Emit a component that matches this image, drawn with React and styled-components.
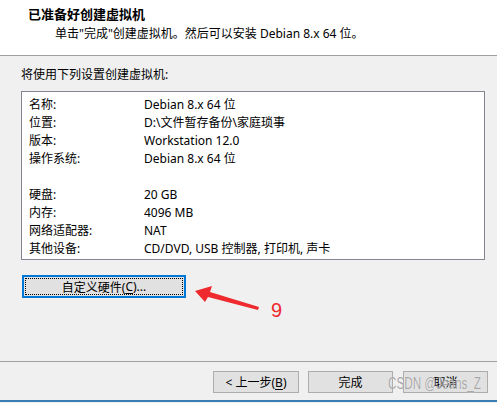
import React from "react";
import styled, { createGlobalStyle } from "styled-components";

const Global = createGlobalStyle`
  html, body {
    margin: 0;
    padding: 0;
    background: #f0f0f0;
  }
  body {
    font-family: "Noto Sans", "Noto Sans CJK SC", sans-serif;
    font-size: 12px;
    color: #000;
  }
`;

const Window = styled.div`
  position: relative;
  width: 497px;
  height: 403px;
  display: flex;
  flex-direction: column;
  background: #f0f0f0;
  overflow: hidden;
`;

const Header = styled.div`
  height: 56px;
  background: #fff;
  border-bottom: 1px solid #a0a0a0;
  padding: 5px 0 0 28px;
  box-sizing: border-box;
  display: flex;
  flex-direction: column;
  gap: 2px;
  h1 {
    margin: 0;
    font-size: 13px;
    font-weight: 700;
    line-height: 18px;
  }
  p {
    margin: 0 0 0 27px;
    line-height: 18px;
  }
`;

const Body = styled.div`
  flex: 1;
  padding: 10px 12px 0 21px;
  display: flex;
  flex-direction: column;
  align-items: flex-start;
`;

const Caption = styled.div`
  line-height: 18px;
`;

const Summary = styled.div`
  margin-top: 7px;
  width: 464px;
  box-sizing: border-box;
  background: #fff;
  border: 1px solid #82878f;
  padding: 4px 0 1px 7px;
`;

const Row = styled.div`
  display: grid;
  grid-template-columns: 115px 1fr;
  height: 18px;
  line-height: 18px;
  white-space: nowrap;
`;

const WinButton = styled.button`
  position: relative;
  font: inherit;
  color: #000;
  height: ${(p) => (p.$focused ? 23 : 22)}px;
  width: ${(p) => p.$w}px;
  padding: 0;
  background: #e1e1e1;
  border: ${(p) => (p.$focused ? "2px solid #0078d7" : "1px solid #adadad")};
  display: flex;
  align-items: center;
  justify-content: center;
  u {
    text-decoration: underline;
    text-underline-offset: 2px;
  }
  &::after {
    content: "";
    display: ${(p) => (p.$focused ? "block" : "none")};
    position: absolute;
    inset: 1px;
    border: 1px dotted #000;
  }
`;

const CustomButton = styled(WinButton)`
  margin: 15px 0 0 1px;
`;

const Footer = styled.div`
  border-top: 1px solid #a0a0a0;
  padding: 9px 9px 7px 0;
  display: flex;
  justify-content: flex-end;
  gap: 9px;
  border-bottom: 2px solid #3c7db5;
  margin-bottom: 1px;
`;

const Annotation = styled.svg`
  position: absolute;
  left: 0;
  top: 0;
  pointer-events: none;
`;

const StepNo = styled.span`
  position: absolute;
  left: 271px;
  top: 299px;
  font-family: "Liberation Sans", sans-serif;
  font-size: 20px;
  color: #ee2a2e;
`;

const Watermark = styled.span`
  position: absolute;
  left: 388px;
  top: 375px;
  white-space: nowrap;
  font-family: "Liberation Sans", sans-serif;
  font-size: 16px;
  transform: scaleX(0.73);
  transform-origin: left center;
  color: rgba(140, 140, 140, 0.75);
  text-shadow: 0 0 1px rgba(255, 255, 255, 0.9);
  pointer-events: none;
`;

const rows = [
  ["名称:", "Debian 8.x 64 位"],
  ["位置:", "D:\\文件暂存备份\\家庭琐事"],
  ["版本:", "Workstation 12.0"],
  ["操作系统:", "Debian 8.x 64 位"],
  ["", ""],
  ["硬盘:", "20 GB"],
  ["内存:", "4096 MB"],
  ["网络适配器:", "NAT"],
  ["其他设备:", "CD/DVD, USB 控制器, 打印机, 声卡"],
];

export default function App() {
  return (
    <Window>
      <Global />
      <Header>
        <h1>已准备好创建虚拟机</h1>
        <p>单击"完成"创建虚拟机。然后可以安装 Debian 8.x 64 位。</p>
      </Header>
      <Body>
        <Caption>将使用下列设置创建虚拟机:</Caption>
        <Summary>
          {rows.map(([k, v], i) => (
            <Row key={i}>
              <span>{k}</span>
              <span>{v}</span>
            </Row>
          ))}
        </Summary>
        <CustomButton $focused $w={164}>
          自定义硬件(<u>C</u>)...
        </CustomButton>
      </Body>
      <Footer>
        <WinButton $w={86}>
          &lt; 上一步(<u>B</u>)
        </WinButton>
        <WinButton $w={85}>完成</WinButton>
        <WinButton $w={85} style={{ marginLeft: 1 }}>
          取消
        </WinButton>
      </Footer>
      <Annotation width="497" height="403" viewBox="0 0 497 403">
        <polygon
          points="195,291 212,286 210,292 259,307 258,310 208,297 205,302"
          fill="#ee2a2e"
        />
      </Annotation>
      <StepNo>9</StepNo>
      <Watermark>CSDN @Jeans_Z</Watermark>
    </Window>
  );
}
